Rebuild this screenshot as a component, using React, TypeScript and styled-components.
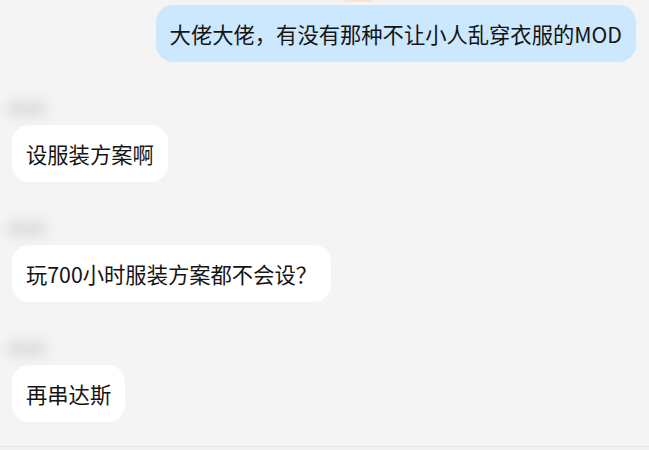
import React from "react";
import styled, { createGlobalStyle } from "styled-components";

const Global = createGlobalStyle`
  html, body { margin: 0; padding: 0; background: #f4f4f4; }
  body { font-family: "Noto Sans CJK SC", "Noto Sans", sans-serif; }
`;

const Page = styled.div`
  width: 649px;
  height: 450px;
  display: flex;
  flex-direction: column;
  background: #f4f4f4;
  overflow: hidden;
  position: relative;
`;

const TopPeek = styled.div`
  position: absolute;
  top: 0;
  left: 345px;
  width: 28px;
  height: 2px;
  background: #fbe3cf;
`;

const List = styled.div`
  flex: 1;
  display: flex;
  flex-direction: column;
  gap: 38px;
  padding: 5px 13px 0 12px;
`;

const Footer = styled.div`
  height: 3px;
  border-top: 1px solid #e4e4e4;
  background: #f1f1f1;
`;

const Outgoing = styled.div`
  display: flex;
  justify-content: flex-end;
`;

const Group = styled.div`
  display: flex;
  flex-direction: column;
  align-items: flex-start;
  gap: 8px;
`;

const Name = styled.div`
  width: 46px;
  height: 17px;
  display: flex;
  align-items: center;
  margin-left: -5px;
`;

const NameBlur = styled.div`
  width: 40px;
  height: 16px;
  border-radius: 8px;
  background: #dfdfdf;
  filter: blur(6px);
`;

const Bubble = styled.div<{ $mine?: boolean }>`
  background: ${(p) => (p.$mine ? "#cce8fe" : "#ffffff")};
  border-radius: 17px;
  padding: 16px 14px;
  font-size: 21.3px;
  line-height: 25px;
  color: #141414;
  white-space: nowrap;
`;

const incoming = ["设服装方案啊", "玩700小时服装方案都不会设？", "再串达斯"];

export default function App() {
  return (
    <Page>
      <Global />
      <TopPeek />
      <List>
        <Outgoing>
          <Bubble $mine>大佬大佬，有没有那种不让小人乱穿衣服的MOD</Bubble>
        </Outgoing>
        {incoming.map((t) => (
          <Group key={t}>
            <Name>
              <NameBlur />
            </Name>
            <Bubble>{t}</Bubble>
          </Group>
        ))}
      </List>
      <Footer />
    </Page>
  );
}
